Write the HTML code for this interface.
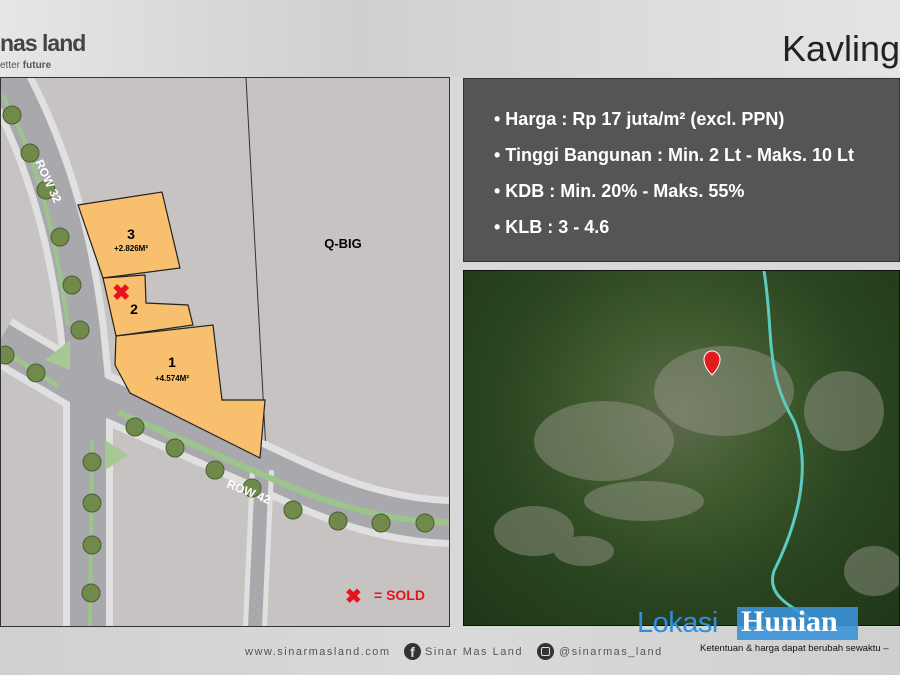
<!DOCTYPE html><html><head><meta charset="utf-8"><style>
body{margin:0;width:900px;height:675px;overflow:hidden;position:relative;font-family:"Liberation Sans",sans-serif;background:#d8d8d8}
.hdr{position:absolute;left:0;top:0;width:900px;height:77px;background:linear-gradient(90deg,#e6e6e6,#cfcfcf 40%,#dcdcdc 70%,#e4e4e4)}
.logo{position:absolute;left:0;top:30px;font-size:23px;font-weight:bold;color:#444;letter-spacing:-1px}
.tag{position:absolute;left:0;top:60px;font-size:10px;color:#555}
.title{position:absolute;left:782px;top:28px;font-size:36px;color:#222}
.box{position:absolute;left:463px;top:78px;width:437px;height:184px;background:#555;border:1px solid #333;box-sizing:border-box}
.box div{position:absolute;left:30px;color:#fff;font-weight:bold;font-size:18px}
.sat{position:absolute;left:463px;top:270px;width:437px;height:356px;background:radial-gradient(ellipse at 50% 40%,#5e6b4c 0%,#3f5a2e 30%,#2a4520 60%,#1f3717 100%);border:1px solid #111;box-sizing:border-box;overflow:hidden}
.foot{position:absolute;left:0;top:627px;width:900px;height:48px;background:linear-gradient(90deg,#d0d0d0,#dadada,#cfcfcf)}
.ft{position:absolute;top:646px;font-size:11px;color:#555;letter-spacing:1.5px}
</style></head><body>
<div class="hdr"></div>
<div class="logo">nas land</div>
<div class="tag">etter <b>future</b></div>
<div class="title">Kavling</div>
<svg style="position:absolute;left:0;top:77px" width="450" height="550" viewBox="0 77 450 550">
<rect x="0" y="77" width="450" height="550" fill="#c7c3c2"/>
<line x1="246" y1="78" x2="267" y2="470" stroke="#333" stroke-width="1"/>
<g fill="none" stroke-linejoin="round">
<g stroke="#e0e0e0" stroke-width="50">
<path d="M5,75 C45,150 70,230 82,330 L88,390"/>
<path d="M88,390 L265,468 C320,495 380,520 450,522"/>
<path d="M0,340 L88,392"/>
<path d="M88,380 L88,627"/>
</g>
<g stroke="#a9a9ad" stroke-width="36">
<path d="M5,75 C45,150 70,230 82,330 L88,390"/>
<path d="M88,390 L265,468 C320,495 380,520 450,522"/>
<path d="M0,340 L88,392"/>
<path d="M88,380 L88,627"/>
</g>
<path d="M262,470 L255,627" stroke="#e0e0e0" stroke-width="24"/><path d="M262,470 L255,627" stroke="#a9a9ad" stroke-width="14"/>
<path d="M2,95 C35,150 55,230 68,325" stroke="#9dc48a" stroke-width="4"/>
<path d="M118,412 L270,478 C330,505 390,522 450,522" stroke="#9dc48a" stroke-width="6"/>
<path d="M0,348 L58,386" stroke="#9dc48a" stroke-width="5"/>
<path d="M92,440 L90,627" stroke="#9dc48a" stroke-width="4"/>
</g>
<path d="M45,360 L70,340 L70,370Z M105,440 L105,470 L128,455Z" fill="#a6c893"/>
<g fill="#6f8a4a" stroke="#4a5e30" stroke-width="1">
<circle cx="12" cy="115" r="9"/><circle cx="30" cy="153" r="9"/><circle cx="46" cy="190" r="9"/><circle cx="60" cy="237" r="9"/><circle cx="72" cy="285" r="9"/><circle cx="80" cy="330" r="9"/>
<circle cx="5" cy="355" r="9"/><circle cx="36" cy="373" r="9"/>
<circle cx="135" cy="427" r="9"/><circle cx="175" cy="448" r="9"/><circle cx="215" cy="470" r="9"/><circle cx="252" cy="488" r="9"/><circle cx="293" cy="510" r="9"/><circle cx="338" cy="521" r="9"/><circle cx="381" cy="523" r="9"/><circle cx="425" cy="523" r="9"/>
<circle cx="92" cy="462" r="9"/><circle cx="92" cy="503" r="9"/><circle cx="92" cy="545" r="9"/><circle cx="91" cy="593" r="9"/>
</g>
<g fill="#f8bf6e" stroke="#222" stroke-width="1.2">
<path d="M78,205 L162,192 L180,268 L103,278 Z"/>
<path d="M103,278 L145,275 L146,303 L188,305 L193,325 L116,336 Z"/>
<path d="M116,336 L213,325 L222,400 L265,400 L260,458 L130,393 L115,365 Z"/>
</g>
<text x="131" y="239" font-size="14" font-weight="bold" text-anchor="middle">3</text>
<text x="131" y="251" font-size="8" font-weight="bold" text-anchor="middle">+2.826M²</text>
<text x="134" y="314" font-size="14" font-weight="bold" text-anchor="middle">2</text>
<text x="172" y="367" font-size="14" font-weight="bold" text-anchor="middle">1</text>
<text x="172" y="381" font-size="8" font-weight="bold" text-anchor="middle">+4.574M²</text>
<text x="343" y="248" font-size="13" font-weight="bold" text-anchor="middle">Q-BIG</text>
<text x="0" y="0" font-size="12" font-weight="bold" fill="#fff" transform="translate(35,162) rotate(65)">ROW 32</text>
<text x="0" y="0" font-size="12" font-weight="bold" fill="#fff" transform="translate(226,487) rotate(22)">ROW 42</text>
<text x="112" y="300" font-size="22" font-weight="bold" fill="#e8141a">✖</text>
<text x="345" y="603" font-size="20" font-weight="bold" fill="#e8141a">✖</text>
<text x="374" y="600" font-size="14" font-weight="bold" fill="#e8141a">= SOLD</text>
<rect x="0.5" y="77.5" width="449" height="549" fill="none" stroke="#333"/>
</svg>
<div class="box">
<div style="top:30px">• Harga : Rp 17 juta/m² (excl. PPN)</div>
<div style="top:66px">• Tinggi Bangunan : Min. 2 Lt - Maks. 10 Lt</div>
<div style="top:102px">• KDB : Min. 20% - Maks. 55%</div>
<div style="top:138px">• KLB : 3 - 4.6</div>
</div>
<div class="sat">
<svg width="437" height="356" style="position:absolute;left:0;top:0">
<g fill="#9c9c8e" opacity=".45"><ellipse cx="140" cy="170" rx="70" ry="40"/><ellipse cx="260" cy="120" rx="70" ry="45"/><ellipse cx="70" cy="260" rx="40" ry="25"/><ellipse cx="180" cy="230" rx="60" ry="20"/><ellipse cx="410" cy="300" rx="30" ry="25"/><ellipse cx="380" cy="140" rx="40" ry="40"/><ellipse cx="120" cy="280" rx="30" ry="15"/></g>
<path d="M300,0 C310,60 300,100 330,150 C350,200 330,260 310,300 C300,330 340,340 360,356" fill="none" stroke="#5ccbc0" stroke-width="3"/>
<path d="M240,88 a8,8 0 1 1 16,0 q0,8 -8,16 q-8,-8 -8,-16z" fill="#e21b1b" stroke="#fff"/>
</svg></div>
<div class="foot"></div>
<div style="position:absolute;left:637px;top:607px;font-size:29px;color:#2f8fdd;letter-spacing:-0.5px;z-index:2">Lokasi</div>
<div style="position:absolute;left:737px;top:607px;width:121px;height:33px;background:#3a92d8;opacity:.9;z-index:2"></div>
<div style="position:absolute;left:741px;top:605px;font-size:30px;color:#fff;font-family:'Liberation Serif',serif;font-weight:bold;z-index:3">Hunian</div>
<div class="ft" style="left:245px">www.sinarmasland.com</div>
<div style="position:absolute;left:404px;top:643px;width:17px;height:17px;border-radius:50%;background:#333;color:#ddd;font-size:14px;font-weight:bold;text-align:center;line-height:19px">f</div>
<div class="ft" style="left:425px">Sinar Mas Land</div>
<div style="position:absolute;left:537px;top:643px;width:17px;height:17px;border-radius:50%;background:#333"><div style="margin:4px;width:7px;height:7px;border:1.5px solid #ddd;border-radius:2px"></div></div>
<div class="ft" style="left:559px">@sinarmas_land</div>
<div style="position:absolute;left:700px;top:643px;font-size:9.5px;color:#111;z-index:4">Ketentuan &amp; harga dapat berubah sewaktu –</div>
</body></html>
